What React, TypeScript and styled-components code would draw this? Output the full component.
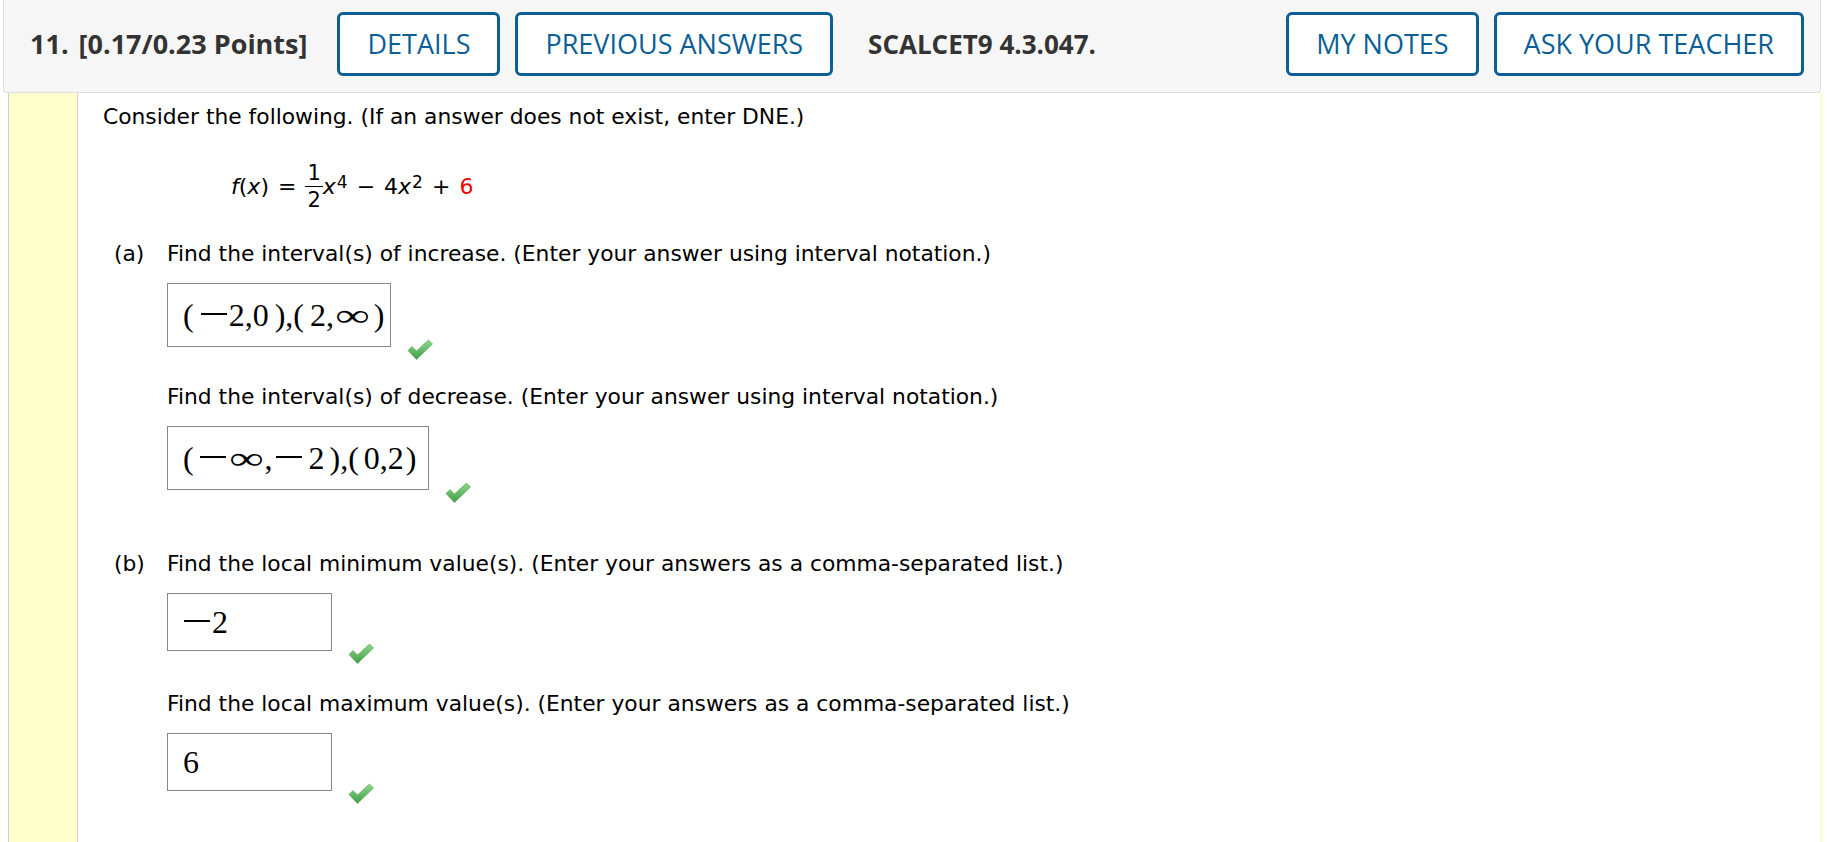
import React from 'react';
import styled, {createGlobalStyle} from "styled-components";

const GlobalStyle = createGlobalStyle`
  body {
    margin: 0;
    background: #fff;
    font-family: "DejaVu Sans", Verdana, sans-serif;
  }
`

const Check: React.FC = () => (
    <CheckMark viewBox="0 0 26 21" width="26" height="21">
        <defs>
            <linearGradient id="chk" x1="0" y1="0" x2="0" y2="1">
                <stop offset="0" stopColor="#8ed98e"/>
                <stop offset="1" stopColor="#3f9f45"/>
            </linearGradient>
        </defs>
        <path d="M1 11.5 L5 7.5 L9.5 12 L21.5 1 L25.5 5 L9.5 20.5 Z" fill="url(#chk)" stroke="#4a9c4e" strokeWidth="0.6"
              strokeLinejoin="round"/>
    </CheckMark>
)

type AnswerProps = { value: React.ReactNode, w: number, h: number }

const Answer: React.FC<AnswerProps> = ({value, w, h}) => (
    <AnswerRow>
        <MathBox $w={w} $h={h}>{value}</MathBox>
        <Check/>
    </AnswerRow>
)

export default function App() {
    return (
        <>
            <GlobalStyle/>
            <Header>
                <Title>11.<Points>[0.17/0.23 Points]</Points></Title>
                <HeadButton>DETAILS</HeadButton>
                <HeadButton>PREVIOUS ANSWERS</HeadButton>
                <Code>SCALCET9 4.3.047.</Code>
                <Spacer/>
                <HeadButton>MY NOTES</HeadButton>
                <HeadButton>ASK YOUR TEACHER</HeadButton>
            </Header>

            <Body>
                <Sidebar/>
                <Content>
                    <Intro>Consider the following. (If an answer does not exist, enter DNE.)</Intro>

                    <Formula>
                        <Ital>f</Ital>(<Ital>x</Ital>)<Op>=</Op>
                        <Fraction>
                            <span>1</span>
                            <span>2</span>
                        </Fraction>
                        <Ital>x</Ital><Sup>4</Sup>
                        <Op>−</Op>4<Ital>x</Ital><Sup>2</Sup>
                        <Op>+</Op><Red>6</Red>
                    </Formula>

                    <Part>
                        <Label>(a)</Label>
                        <PartBody>
                            <Question>Find the interval(s) of increase. (Enter your answer using interval notation.)</Question>
                            <Answer w={224} h={64} value={<>(<Gap $w={6}/><Minus/>2,0<Gap $w={6}/>),(<Gap $w={6}/>2,<Inf/><Gap $w={3}/>)</>}/>
                            <Question $gap={37}>Find the interval(s) of decrease. (Enter your answer using interval notation.)</Question>
                            <Answer w={262} h={64} value={<>(<Gap $w={5}/><Minus/><Inf/>,<Gap $w={3}/><Minus/><Gap $w={4}/>2<Gap $w={5}/>),(<Gap $w={5}/>0,2<Gap $w={2}/>)</>}/>
                        </PartBody>
                    </Part>

                    <Part $gap={61}>
                        <Label>(b)</Label>
                        <PartBody>
                            <Question>Find the local minimum value(s). (Enter your answers as a comma-separated list.)</Question>
                            <Answer w={165} h={58} value={<><Minus/>2</>}/>
                            <Question $gap={40}>Find the local maximum value(s). (Enter your answers as a comma-separated list.)</Question>
                            <Answer w={165} h={58} value={<>6</>}/>
                        </PartBody>
                    </Part>
                </Content>
            </Body>
        </>
    );
}

const Header = styled.div`
  display: flex;
  align-items: center;
  box-sizing: border-box;
  width: 1818px;
  height: 93px;
  margin-left: 3px;
  padding: 0 16px 5px 26px;
  background: #f6f6f6;
  border: 1px solid #dedede;
  border-top: none;
  border-radius: 0 0 4px 4px;
  font-family: "Open Sans", sans-serif;
  font-size: 27px;
`

const Title = styled.div`
  font-weight: 700;
  color: #333;
  margin-right: 30px;
`

const Points = styled.span`
  margin-left: 10px;
`

const HeadButton = styled.div`
  box-sizing: border-box;
  height: 64px;
  padding: 0 27px;
  margin-right: 15px;
  display: flex;
  align-items: center;
  border: 3px solid #0b5f96;
  border-radius: 6px;
  background: #fff;
  color: #0b5f96;

  &:last-child {
    margin-right: 0;
  }
`

const Code = styled.div`
  font-weight: 700;
  font-size: 26px;
  color: #333;
  margin-left: 20px;
`

const Spacer = styled.div`
  flex: 1;
`

const Body = styled.div`
  display: flex;
  width: 1814px;
  min-height: 749px;
  margin-left: 8px;
`

const Sidebar = styled.div`
  width: 68px;
  background: #ffffcc;
  border-left: 1px solid #cfcfcf;
  border-right: 1px solid #cfcfcf;
`

const Content = styled.div`
  flex: 1;
  padding: 11px 0 0 25px;
  border-right: 2px solid #ffffc4;
  color: #000;
  font-size: 21.8px;
  line-height: 26px;
`

const Intro = styled.div``

const Formula = styled.div`
  display: flex;
  align-items: center;
  margin: 30px 0 0 128px;
  font-size: 22px;
`

const Ital = styled.i`
  font-style: italic;
`

const Op = styled.span`
  margin: 0 9px;
`

const Sup = styled.span`
  font-size: 17px;
  align-self: flex-start;
  margin-top: 9px;
  margin-left: 1px;
`

const Red = styled.span`
  color: #e00;
`

const Fraction = styled.span`
  display: inline-flex;
  flex-direction: column;
  align-items: center;
  font-size: 21px;
  line-height: 26px;

  span:first-child {
    border-bottom: 1px solid #000;
    padding: 0 2px;
  }
`

const Part = styled.div<{ $gap?: number }>`
  display: flex;
  margin-top: ${p => p.$gap ?? 28}px;
  padding-left: 11px;
`

const Label = styled.div`
  width: 53px;
`

const PartBody = styled.div`
  display: flex;
  flex-direction: column;
  align-items: flex-start;
`

const Question = styled.div<{ $gap?: number }>`
  margin-top: ${p => p.$gap ?? 0}px;
`

const AnswerRow = styled.div`
  display: flex;
  align-items: flex-end;
  margin-top: 16px;
`

const MathBox = styled.div<{ $w: number, $h: number }>`
  box-sizing: border-box;
  width: ${p => p.$w}px;
  height: ${p => p.$h}px;
  padding-left: 15px;
  display: flex;
  align-items: center;
  border: 1px solid #888;
  font-family: "Liberation Serif", "DejaVu Serif", serif;
  font-size: 32px;
  white-space: nowrap;
`

const Gap = styled.span<{ $w: number }>`
  display: inline-block;
  width: ${p => p.$w}px;
`

const MinusGlyph = styled.span`
  display: inline-block;
  width: 26px;
  height: 1.6px;
  margin: 0 2px 0 1px;
  background: #000;
  transform: translateY(-1px);
`

const Minus: React.FC = () => <MinusGlyph aria-label="−"/>

const InfGlyph = styled.span`
  display: inline-block;
  transform: scaleX(1.5);
  margin: 0 7px;
`

const Inf: React.FC = () => <InfGlyph>∞</InfGlyph>

const CheckMark = styled.svg`
  margin: 0 0 -13px 16px;
`
